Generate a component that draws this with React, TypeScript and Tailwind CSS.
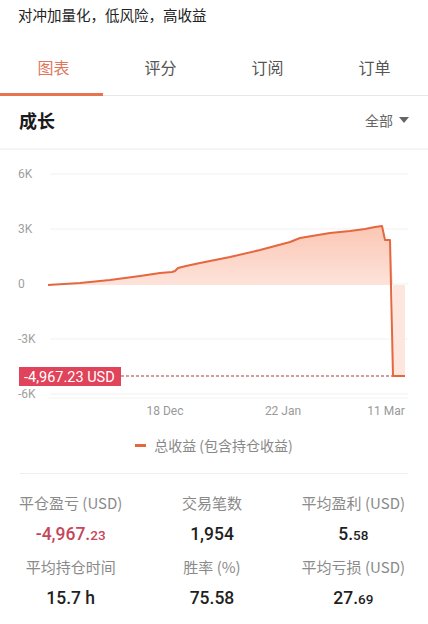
const pts: [number, number][] = [
  [48, 285], [80, 283], [110, 280], [140, 276], [160, 273], [172, 272], [175, 271],
  [178, 268], [186, 266], [200, 263], [230, 257], [260, 250], [290, 242], [300, 238],
  [330, 233], [350, 231], [365, 229], [375, 227], [382, 226], [385, 240], [390, 240],
  [393, 376], [405, 376],
];

// chart svg starts at page y = 150
const OFF = 150;

const Chart = () => {
  const line = pts.map(([x, y], i) => `${i ? "L" : "M"}${x} ${y - OFF}`).join(" ");
  const upper = pts.slice(0, 21);
  const fill =
    upper.map(([x, y], i) => `${i ? "L" : "M"}${x} ${y - OFF}`).join(" ") +
    ` L393 ${285 - OFF} L48 ${285 - OFF} Z`;
  const grid = [
    { y: 174, label: "6K" },
    { y: 229, label: "3K" },
    { y: 284, label: "0" },
    { y: 339, label: "-3K" },
    { y: 394, label: "-6K" },
  ];
  return (
    <svg width="428" height="280" viewBox="0 0 428 280" className="block" style={{ fontFamily: "Roboto, sans-serif" }}>
      <defs>
        <linearGradient id="g" x1="0" y1="0" x2="0" y2="1">
          <stop offset="0" stopColor="#fbc6b4" />
          <stop offset="1" stopColor="#fde3da" />
        </linearGradient>
      </defs>
      {grid.map((g) => (
        <g key={g.label}>
          <line x1="50" x2="408" y1={g.y - OFF} y2={g.y - OFF} stroke="#f1f1f1" strokeWidth="1" />
          <text x="18" y={g.y - OFF + 4} fontSize="12" fill="#a0a0a0">
            {g.label}
          </text>
        </g>
      ))}
      <path d={fill} fill="url(#g)" />
      <rect x="393" y={285 - OFF} width="12" height={376 - 285} fill="#fde6de" />
      <line x1="121" x2="393" y1={376 - OFF} y2={376 - OFF} stroke="#a33a4a" strokeWidth="1" strokeDasharray="3 2" />
      <path d={line} fill="none" stroke="#e5673f" strokeWidth="2" strokeLinejoin="round" />
      <rect x="19" y={367 - OFF} width="102" height="19" fill="#e0435a" />
      <text x="24" y={381.5 - OFF} fontSize="14.5" fill="#fff">
        -4,967.23 USD
      </text>
      <line x1="48" x2="408" y1={398 - OFF} y2={398 - OFF} stroke="#f3f3f3" />
      <text x="165" y={415 - OFF} fontSize="12" fill="#999" textAnchor="middle">18 Dec</text>
      <text x="283" y={415 - OFF} fontSize="12" fill="#999" textAnchor="middle">22 Jan</text>
      <text x="386" y={415 - OFF} fontSize="12" fill="#999" textAnchor="middle">11 Mar</text>
    </svg>
  );
};

const Stat = ({ label, value, dec, red }: { label: string; value: string; dec?: string; red?: boolean }) => (
  <div className="flex flex-col items-center">
    <div className="text-[15px] leading-[20px] text-[#8a8a8a]">{label}</div>
    <div
      className={`mt-[9px] text-[17.5px] leading-[24px] font-medium ${red ? "text-[#c4475b]" : "text-[#1f1f1f]"}`}
      style={{ fontFamily: "Roboto, 'Noto Sans CJK SC', sans-serif" }}
    >
      {value}
      {dec && <span className="text-[13.5px]">{dec}</span>}
    </div>
  </div>
);

export default function App() {
  const tabs = ["图表", "评分", "订阅", "订单"];
  return (
    <div
      className="w-[428px] h-[624px] overflow-hidden bg-white"
      style={{ fontFamily: "'Noto Sans CJK SC', 'Noto Sans', sans-serif" }}
    >
      <div className="h-[39px] px-[18px] pt-[4px] text-[14.5px] leading-[22px] text-[#222]">
        对冲加量化，低风险，高收益
      </div>
      <div className="flex h-[57px] border-b border-[#e8e8e8]">
        {tabs.map((t, i) => (
          <div key={t} className="relative flex-1 flex items-center justify-center text-[16px]">
            <span className={i === 0 ? "text-[#e0775c]" : "text-[#555]"}>{t}</span>
            {i === 0 && <div className="absolute left-0 right-[4px] bottom-[-1px] h-[3px] bg-[#e8744f]" />}
          </div>
        ))}
      </div>
      <div className="flex items-center justify-between h-[54px] pb-[3px] px-[19px] border-b-2 border-[#f5f5f5]">
        <span className="text-[18px] font-bold text-[#1a1a1a]">成长</span>
        <span className="flex items-center gap-[6px] text-[14px] text-[#666]">
          全部
          <svg width="10" height="7" viewBox="0 0 10 7">
            <path d="M0 0 L10 0 L5 6 Z" fill="#666" />
          </svg>
        </span>
      </div>
      <Chart />
      <div className="flex items-center justify-center gap-[8px] h-[30px] text-[14px] text-[#888]">
        <div className="w-[11px] h-[3px] bg-[#e5673f]" />
        <span>总收益 (包含持仓收益)</span>
      </div>
      <div className="mx-[20px] mt-[13px] h-px bg-[#eeeeee]" />
      <div className="grid grid-cols-3 gap-y-[10px] pt-[19px] pr-[4px]">
        <Stat label="平仓盈亏 (USD)" value="-4,967." dec="23" red />
        <Stat label="交易笔数" value="1,954" />
        <Stat label="平均盈利 (USD)" value="5." dec="58" />
        <Stat label="平均持仓时间" value="15.7 h" />
        <Stat label="胜率 (%)" value="75.58" />
        <Stat label="平均亏损 (USD)" value="27." dec="69" />
      </div>
    </div>
  );
}
